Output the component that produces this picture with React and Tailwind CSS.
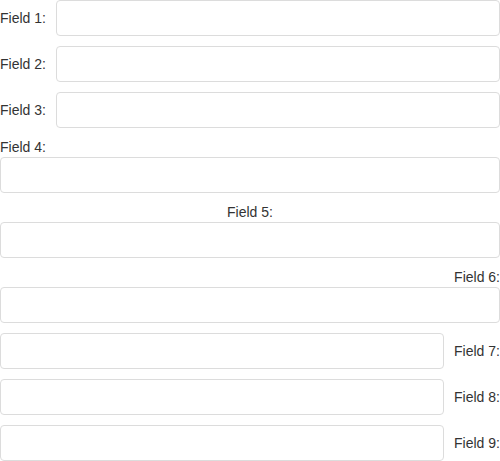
import React from 'react';

// Input dasar yang dipakai semua baris
const Input = ({ className = '' }) => (
  <input
    type="text"
    className={`h-9 rounded border border-[#dcdcdc] bg-white px-3 outline-none ${className}`}
  />
);

const Label = ({ children, className = '' }) => (
  <label className={`text-[14px] text-[#333] ${className}`}>{children}</label>
);

export default function App() {
  return (
    <div className="w-[500px] font-['Liberation_Sans',Arial,sans-serif] text-[14px] text-[#333]">
      {/* Label di kiri */}
      {[1, 2, 3].map((n) => (
        <div key={n} className="mb-[10px] flex items-center gap-[10px]">
          <Label className="w-[46px] shrink-0 whitespace-nowrap">Field {n}:</Label>
          <Input className="min-w-0 flex-1" />
        </div>
      ))}

      {/* Label di atas, kiri */}
      <div className="mb-[10px] flex flex-col">
        <Label className="leading-[19px]">Field 4:</Label>
        <Input className="w-full" />
      </div>

      {/* Label di atas, tengah */}
      <div className="mb-[10px] flex flex-col">
        <Label className="text-center leading-[19px]">Field 5:</Label>
        <Input className="w-full" />
      </div>

      {/* Label di atas, kanan */}
      <div className="mb-[10px] flex flex-col">
        <Label className="text-right leading-[19px]">Field 6:</Label>
        <Input className="w-full" />
      </div>

      {/* Label di kanan */}
      {[7, 8, 9].map((n) => (
        <div key={n} className="mb-[10px] flex items-center gap-[10px] last:mb-0">
          <Input className="min-w-0 flex-1" />
          <Label className="w-[46px] shrink-0 whitespace-nowrap">Field {n}:</Label>
        </div>
      ))}
    </div>
  );
}
